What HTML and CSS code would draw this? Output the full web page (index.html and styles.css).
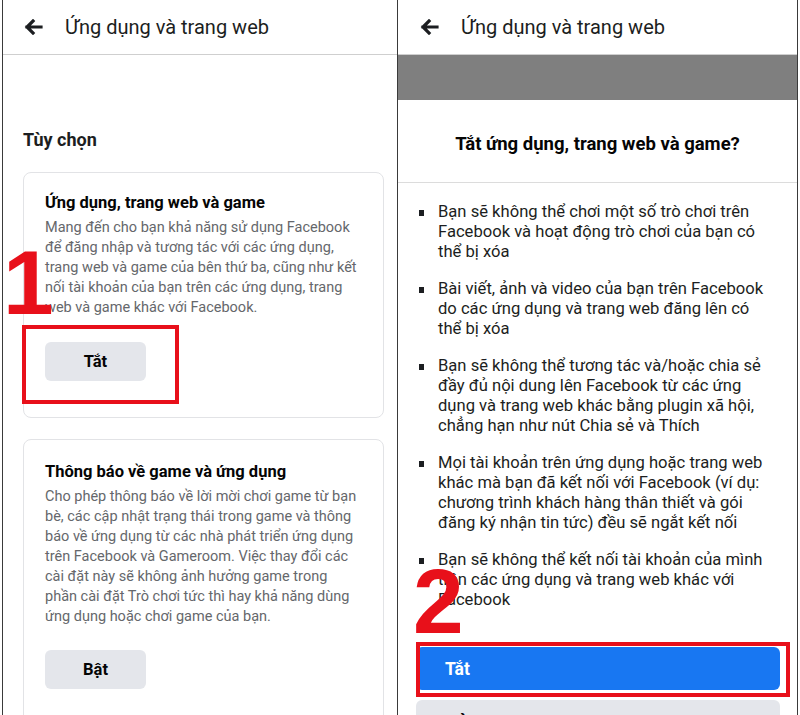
FILE: index.html
```html
<!DOCTYPE html>
<html lang="vi">
<head>
<meta charset="utf-8">
<title>Ứng dụng và trang web</title>
<link rel="stylesheet" href="styles.css">
</head>
<body>
<div class="screen">
  <section class="panel panel-left">
    <header class="topbar">
      <svg class="back" width="20" height="16" viewBox="0 0 20 16"><path d="M18 8H4M10 2L4 8l6 6" fill="none" stroke="#1c1e21" stroke-width="3.2" stroke-linecap="square"/></svg>
      <h1 class="topbar-title">Ứng dụng và trang web</h1>
    </header>
    <div class="content">
      <h2 class="section-title">Tùy chọn</h2>
      <div class="card">
        <h3 class="card-title">Ứng dụng, trang web và game</h3>
        <p class="card-desc">Mang đến cho bạn khả năng sử dụng Facebook<br>để đăng nhập và tương tác với các ứng dụng,<br>trang web và game của bên thứ ba, cũng như kết<br>nối tài khoản của bạn trên các ứng dụng, trang<br>web và game khác với Facebook.</p>
        <button class="btn-grey">Tắt</button>
      </div>
      <div class="card card-second">
        <h3 class="card-title">Thông báo về game và ứng dụng</h3>
        <p class="card-desc">Cho phép thông báo về lời mời chơi game từ bạn<br>bè, các cập nhật trạng thái trong game và thông<br>báo về ứng dụng từ các nhà phát triển ứng dụng<br>trên Facebook và Gameroom. Việc thay đổi các<br>cài đặt này sẽ không ảnh hưởng game trong<br>phần cài đặt Trò chơi tức thì hay khả năng dùng<br>ứng dụng hoặc chơi game của bạn.</p>
        <button class="btn-grey">Bật</button>
      </div>
    </div>
  </section>
  <section class="panel panel-right">
    <header class="topbar">
      <svg class="back" width="20" height="16" viewBox="0 0 20 16"><path d="M18 8H4M10 2L4 8l6 6" fill="none" stroke="#1c1e21" stroke-width="3.2" stroke-linecap="square"/></svg>
      <h1 class="topbar-title">Ứng dụng và trang web</h1>
    </header>
    <div class="dim"></div>
    <div class="modal">
      <div class="modal-head">
        <h2 class="modal-title">Tắt ứng dụng, trang web và game?</h2>
      </div>
      <ul class="bullets">
        <li><span>Bạn sẽ không thể chơi một số trò chơi trên<br>Facebook và hoạt động trò chơi của bạn có<br>thể bị xóa</span></li>
        <li><span>Bài viết, ảnh và video của bạn trên Facebook<br>do các ứng dụng và trang web đăng lên có<br>thể bị xóa</span></li>
        <li><span>Bạn sẽ không thể tương tác và/hoặc chia sẻ<br>đầy đủ nội dung lên Facebook từ các ứng<br>dụng và trang web khác bằng plugin xã hội,<br>chẳng hạn như nút Chia sẻ và Thích</span></li>
        <li><span>Mọi tài khoản trên ứng dụng hoặc trang web<br>khác mà bạn đã kết nối với Facebook (ví dụ:<br>chương trình khách hàng thân thiết và gói<br>đăng ký nhận tin tức) đều sẽ ngắt kết nối</span></li>
        <li><span>Bạn sẽ không thể kết nối tài khoản của mình<br>trên các ứng dụng và trang web khác với<br>Facebook</span></li>
      </ul>
      <button class="btn-blue">Tắt</button>
      <button class="btn-cancel">Hủy</button>
    </div>
  </section>
  <div class="mark mark-box1"></div>
  <div class="mark mark-num1">1</div>
  <div class="mark mark-box2"></div>
  <div class="mark mark-num2">2</div>
</div>
</body>
</html>
```
FILE: styles.css
```css
* { box-sizing: border-box; }
html, body { margin: 0; padding: 0; background: #fff; }
body { font-family: Roboto, "Liberation Sans", Arial, sans-serif; color: #1c1e21; }
h1, h2, h3, p, ul { margin: 0; padding: 0; }

.screen {
  position: relative;
  width: 800px;
  height: 715px;
  overflow: hidden;
  display: flex;
  padding-left: 2px;
}

.panel {
  height: 715px;
  overflow: hidden;
  background: #fff;
  display: flex;
  flex-direction: column;
}
.panel-left {
  width: 396px;
  border-left: 1px solid #3a3a3a;
  border-right: 1px solid #3a3a3a;
}
.panel-right {
  width: 400px;
  border-right: 1px solid #3a3a3a;
}

.topbar {
  height: 55px;
  flex: none;
  display: flex;
  align-items: center;
  border-bottom: 1px solid #cfcfcf;
  padding-left: 20px;
}
.panel-right .topbar { padding-left: 21px; }
.back { flex: none; margin-top: -1px; }
.topbar-title {
  font-size: 20px;
  font-weight: 400;
  margin-left: 22px;
  color: #1c1e21;
}

.content {
  padding: 73px 13px 0 20px;
}
.section-title {
  font-size: 18px;
  line-height: 24px;
  font-weight: 700;
  color: #1c1e21;
}

.card {
  margin-top: 20px;
  border: 1px solid #e2e3e6;
  border-radius: 8px;
  padding: 19px 10px 36px 21px;
  white-space: nowrap;
}
.card-second {
  margin-top: 21px;
  padding-top: 21px;
}
.card-title {
  font-size: 16.5px;
  line-height: 22px;
  font-weight: 700;
  color: #050505;
}
.card-desc {
  margin-top: 4px;
  font-size: 14.5px;
  line-height: 20px;
  color: #65676b;
}
.btn-grey {
  display: block;
  margin-top: 24px;
  width: 101px;
  height: 39px;
  border: none;
  border-radius: 6px;
  background: #e4e6eb;
  font-family: Roboto, "Liberation Sans", Arial, sans-serif;
  font-size: 16.5px;
  font-weight: 700;
  color: #050505;
}
.card-second .btn-grey { margin-top: 23px; }

.dim {
  height: 45px;
  flex: none;
  background: #7f7f7f;
}
.modal {
  flex: 1;
  background: #fff;
  padding: 0 18px;
}
.modal-head {
  height: 83px;
  margin: 0 -18px;
  border-bottom: 1px solid #dcdcdc;
  display: flex;
  align-items: center;
  justify-content: center;
}
.modal-title {
  font-size: 18.5px;
  font-weight: 700;
  color: #050505;
  margin-top: 5px;
}

.bullets {
  list-style: none;
  padding-top: 19px;
  white-space: nowrap;
}
.bullets li {
  display: flex;
  font-size: 16.6px;
  line-height: 20px;
  color: #1c1e21;
  margin-bottom: 17px;
}
.bullets li:last-child { margin-bottom: 0; }
.bullets li::before {
  content: "";
  flex: none;
  width: 5px;
  height: 6px;
  background: #1c1e21;
  margin: 8px 14px 0 3px;
}

.btn-blue,
.btn-cancel {
  display: block;
  width: 364px;
  height: 43px;
  border: none;
  border-radius: 6px;
  text-align: left;
  padding-left: 29px;
  font-family: Roboto, "Liberation Sans", Arial, sans-serif;
  font-size: 17.5px;
  font-weight: 700;
}
.btn-blue {
  margin-top: 37px;
  background: #1877f2;
  color: #fff;
}
.btn-cancel {
  margin-top: 10px;
  background: #e4e6eb;
  color: #050505;
}

.mark { position: absolute; }
.mark-box1 {
  left: 22px;
  top: 325px;
  width: 157px;
  height: 79px;
  border: 4px solid #e8101a;
}
.mark-box2 {
  left: 416px;
  top: 642px;
  width: 374px;
  height: 55px;
  border: 4px solid #e8101a;
}
.mark-num1, .mark-num2 {
  font-family: "Liberation Sans", Arial, sans-serif;
  font-weight: 700;
  color: #e8101a;
  line-height: 1;
}
.mark-num1 {
  font-size: 91px;
  left: 3px;
  top: 237px;
}
.mark-num2 {
  font-size: 91px;
  left: 413px;
  top: 556px;
}
```
